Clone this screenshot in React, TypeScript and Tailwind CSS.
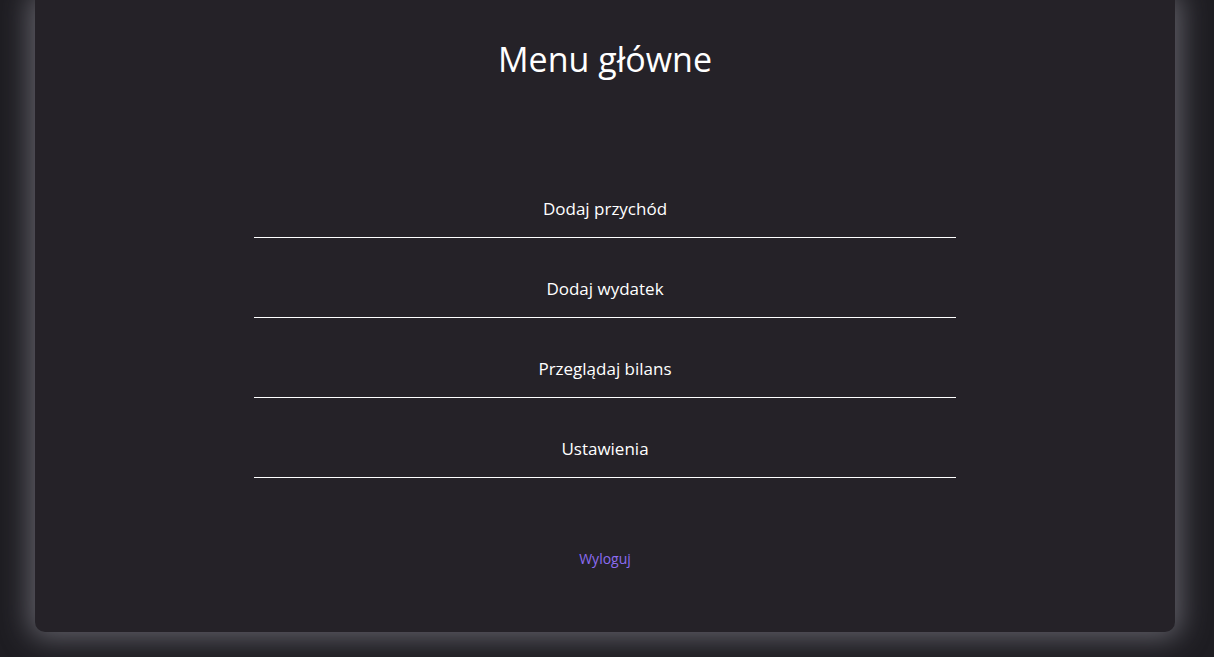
import React from "react";

const items = ["Dodaj przychód", "Dodaj wydatek", "Przeglądaj bilans", "Ustawienia"];

export default function App() {
  return (
    <div
      className="w-full h-[657px] overflow-hidden bg-[#1e1d22] text-white"
      style={{ fontFamily: "'Open Sans', 'Noto Sans', sans-serif" }}
    >
      <div className="ml-[35px] w-[1140px] h-[632px] bg-[#252228] rounded-b-[10px] shadow-[0_0_28px_6px_rgba(120,119,128,0.75)] flex flex-col items-center">
        <h1 className="mt-[38px] text-[34px] leading-[42px] font-normal">Menu główne</h1>
        <ul className="mt-[78px] w-[702px] flex flex-col">
          {items.map((t) => (
            <li
              key={t}
              className="pt-[39px] pb-[16px] border-b border-white text-center text-[17px] leading-6 font-medium"
            >
              {t}
            </li>
          ))}
        </ul>
        <a href="#" className="mt-[71px] text-[14px] leading-5 text-[#8b6cf0]">
          Wyloguj
        </a>
      </div>
    </div>
  );
}
